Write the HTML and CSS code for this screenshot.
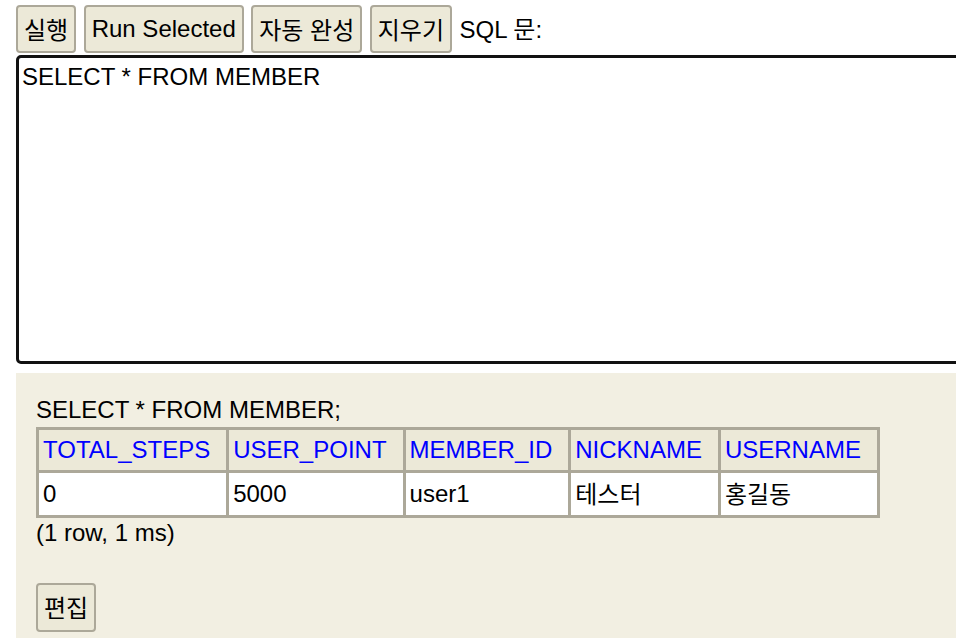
FILE: index.html
```html
<!DOCTYPE html>
<html lang="ko">
<head>
<meta charset="utf-8">
<title>H2 Console</title>
<link rel="stylesheet" href="styles.css">
</head>
<body>
<div class="toolbar">
  <button class="btn"><span class="ko">실행</span></button>
  <button class="btn">Run Selected</button>
  <button class="btn"><span class="ko">자동</span> <span class="ko">완성</span></button>
  <button class="btn"><span class="ko">지우기</span></button>
  <span class="label">SQL <span class="ko">문</span>:</span>
</div>
<textarea class="sql">SELECT * FROM MEMBER</textarea>
<div class="result">
  <div class="stmt">SELECT * FROM MEMBER;</div>
  <table class="grid">
    <tr>
      <th>TOTAL_STEPS</th>
      <th>USER_POINT</th>
      <th>MEMBER_ID</th>
      <th>NICKNAME</th>
      <th>USERNAME</th>
    </tr>
    <tr>
      <td>0</td>
      <td>5000</td>
      <td>user1</td>
      <td><span class="ko">테스터</span></td>
      <td><span class="ko">홍길동</span></td>
    </tr>
  </table>
  <div class="count">(1 row, 1 ms)</div>
  <button class="btn edit"><span class="ko">편집</span></button>
</div>
</body>
</html>
```
FILE: styles.css
```css
html, body {
  overflow: hidden;
}
body {
  margin: 0;
  padding: 5px 0 0 16px;
  background: #ffffff;
  color: #000000;
  font-family: "Liberation Sans", "Noto Sans CJK KR", sans-serif;
  font-size: 24px;
  line-height: 28px;
}
.ko {
  font-family: "Noto Sans CJK KR", "Liberation Sans", sans-serif;
}
.toolbar {
  display: flex;
  align-items: center;
  gap: 7.5px;
  height: 48px;
}
.btn {
  box-sizing: border-box;
  height: 48px;
  margin: 0;
  padding: 8px 6px;
  border: 2px solid #aca899;
  border-radius: 4px;
  background: #ece9d8;
  color: #000;
  font-family: "Liberation Sans", "Noto Sans CJK KR", sans-serif;
  font-size: 24px;
  line-height: 28px;
  white-space: nowrap;
}
.label {
  white-space: nowrap;
}
.sql {
  display: block;
  box-sizing: border-box;
  width: 1000px;
  height: 309px;
  margin: 2px 0 0 0;
  padding: 5px 3px;
  border: 3px solid #111111;
  border-radius: 5px;
  background: #ffffff;
  font-family: "Liberation Sans", sans-serif;
  font-size: 24px;
  line-height: 28px;
  resize: none;
  outline: none;
}
.result {
  margin-top: 9px;
  padding: 23px 20px 40px 20px;
  background: #f2efe2;
}
.stmt {
  line-height: 28px;
}
.grid {
  margin-top: 3px;
  border-collapse: collapse;
  border: 3px solid #aca899;
}
.grid th, .grid td {
  border: 3px solid #aca899;
  line-height: 28px;
  text-align: left;
  font-weight: normal;
  white-space: nowrap;
}
.grid th {
  background: #ece9d8;
  color: #0000ff;
  padding: 6px 16px 6px 4px;
}
.grid td {
  background: #ffffff;
  padding: 6px 4px;
}
.count {
  margin-top: 1px;
}
.edit {
  display: block;
  margin-top: 36px;
  height: 49px;
}
```
